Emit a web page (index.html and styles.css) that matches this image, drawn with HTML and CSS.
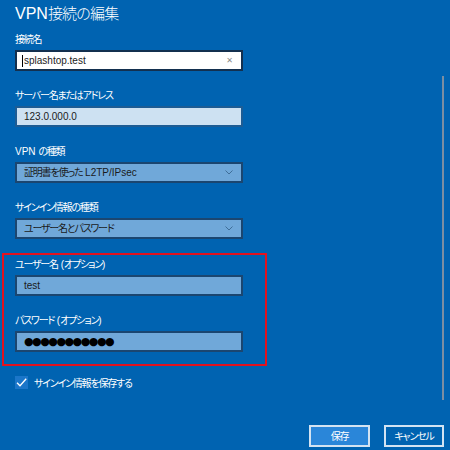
FILE: index.html
```html
<!DOCTYPE html>
<html lang="ja">
<head>
<meta charset="utf-8">
<title>VPN接続の編集</title>
<link rel="stylesheet" href="styles.css">
</head>
<body>
<div class="dialog">
  <h1 class="title">VPN<span class="ja-title">接続の編集</span></h1>

  <div class="field first">
    <div class="label"><span class="ja">接続名</span></div>
    <div class="box box-white"><span class="caret"></span><span class="value">splashtop.test</span><span class="clear">✕</span></div>
  </div>

  <div class="field">
    <div class="label"><span class="ja">サーバー名またはアドレス</span></div>
    <div class="box box-pale"><span class="value">123.0.000.0</span></div>
  </div>

  <div class="field">
    <div class="label">VPN <span class="ja">の種類</span></div>
    <div class="box box-blue"><span class="value"><span class="ja">証明書を使った</span> L2TP/IPsec</span>
      <svg class="chev" width="8" height="5" viewBox="0 0 8 5"><path d="M0.5 0.5 L4 4 L7.5 0.5" fill="none" stroke="#3f6e98" stroke-width="1"/></svg>
    </div>
  </div>

  <div class="field">
    <div class="label"><span class="ja">サインイン情報の種類</span></div>
    <div class="box box-blue"><span class="value"><span class="ja">ユーザー名とパスワード</span></span>
      <svg class="chev" width="8" height="5" viewBox="0 0 8 5"><path d="M0.5 0.5 L4 4 L7.5 0.5" fill="none" stroke="#3f6e98" stroke-width="1"/></svg>
    </div>
  </div>

  <div class="highlight">
    <div class="field inner-first">
      <div class="label"><span class="ja">ユーザー名</span> (<span class="ja">オプション</span>)</div>
      <div class="box box-blue"><span class="value">test</span></div>
    </div>
    <div class="field inner-second">
      <div class="label"><span class="ja">パスワード</span> (<span class="ja">オプション</span>)</div>
      <div class="box box-blue"><span class="dots">●●●●●●●●●●●</span></div>
    </div>
  </div>

  <div class="remember">
    <span class="check">
      <svg width="13" height="13" viewBox="0 0 13 13"><path d="M2 6.8 L5 9.8 L11.2 2.8" fill="none" stroke="#ffffff" stroke-width="1.3"/></svg>
    </span>
    <span class="remember-text ja">サインイン情報を保存する</span>
  </div>

  <div class="actions">
    <button class="btn btn-primary"><span class="ja">保存</span></button>
    <button class="btn"><span class="ja">キャンセル</span></button>
  </div>
</div>
<div class="scrollbar"></div>
</body>
</html>
```
FILE: styles.css
```css
html, body {
  margin: 0;
  padding: 0;
}
body {
  width: 450px;
  height: 450px;
  overflow: hidden;
  background: #0063b1;
  font-family: "Liberation Sans", "Noto Sans CJK JP", sans-serif;
  font-feature-settings: "palt";
  color: #ffffff;
  position: relative;
}
.ja {
  font-family: "Noto Sans CJK JP", sans-serif;
  font-feature-settings: "palt";
  letter-spacing: -1.2px;
  line-height: 1;
}
.dialog {
  padding-left: 15px;
}
.title {
  margin: 0;
  padding-top: 2px;
  height: 24px;
  font-family: "Liberation Sans", "Noto Sans CJK JP", sans-serif;
  font-size: 16px;
  line-height: 24px;
  font-weight: 400;
  display: flex;
  align-items: baseline;
}
.ja-title {
  font-family: "Noto Sans CJK JP", sans-serif;
  font-weight: 300;
  letter-spacing: -0.8px;
  font-size: 15px;
  line-height: 1;
}
.field {
  margin-top: 17px;
}
.field.first {
  margin-top: 6px;
}
.label {
  font-size: 10px;
  height: 15px;
  line-height: 15px;
  margin-bottom: 3px;
  white-space: nowrap;
}
.box {
  box-sizing: border-box;
  width: 228px;
  height: 21px;
  border: 2px solid #15395d;
  display: flex;
  align-items: center;
  padding-left: 7px;
  padding-right: 6px;
  font-size: 10px;
  color: #1a1a1a;
}
.box-white {
  background: #ffffff;
  border-color: #13304f;
  padding-left: 5px;
}
.box-pale {
  background: #cde1f2;
  border-color: #1d5c94;
}
.box-blue {
  background: #70a8d9;
  border-color: #1b4670;
}
.value {
  flex: 1;
  white-space: nowrap;
  height: 15px;
  line-height: 15px;
}
.caret {
  width: 1px;
  height: 12px;
  background: #000;
  margin-right: 1px;
}
.clear {
  font-family: "DejaVu Sans", sans-serif;
  font-size: 8px;
  color: #8a8a8a;
  line-height: 10px;
  margin-right: 2px;
}
.chev {
  flex: none;
  margin-right: 2px;
}
.highlight {
  margin-top: 14px;
  margin-left: -13px;
  width: 232px;
  border: 2px solid #e3121f;
  padding: 2px 18px 12px 11px;
}
.field.inner-first {
  margin-top: 0;
}
.field.inner-second {
  margin-top: 17px;
}
.dots {
  color: #000;
  height: 15px;
  line-height: 15px;
  font-family: "DejaVu Sans", sans-serif;
  font-size: 11px;
  letter-spacing: -1.5px;
}
.remember {
  margin-top: 10px;
  display: flex;
  align-items: center;
  gap: 6px;
  height: 13px;
}
.check {
  width: 13px;
  height: 13px;
  background: #1b76c9;
  display: block;
}
.check svg {
  display: block;
}
.remember-text {
  font-size: 10px;
  line-height: 13px;
}
.actions {
  margin-top: 36px;
  display: flex;
  justify-content: flex-end;
  gap: 14px;
  padding-right: 6px;
}
.btn {
  box-sizing: border-box;
  width: 60px;
  height: 22px;
  background: #0063b1;
  border: 2px solid #d3e3f2;
  color: #ffffff;
  font-family: "Noto Sans CJK JP", sans-serif;
  font-size: 10px;
  padding: 0;
  line-height: 16px;
}
.btn-primary {
  width: 61px;
  background: #2a86d9;
}
.scrollbar {
  position: absolute;
  left: 442px;
  top: 76px;
  width: 2px;
  height: 324px;
  background: #7b8ea2;
}
```
